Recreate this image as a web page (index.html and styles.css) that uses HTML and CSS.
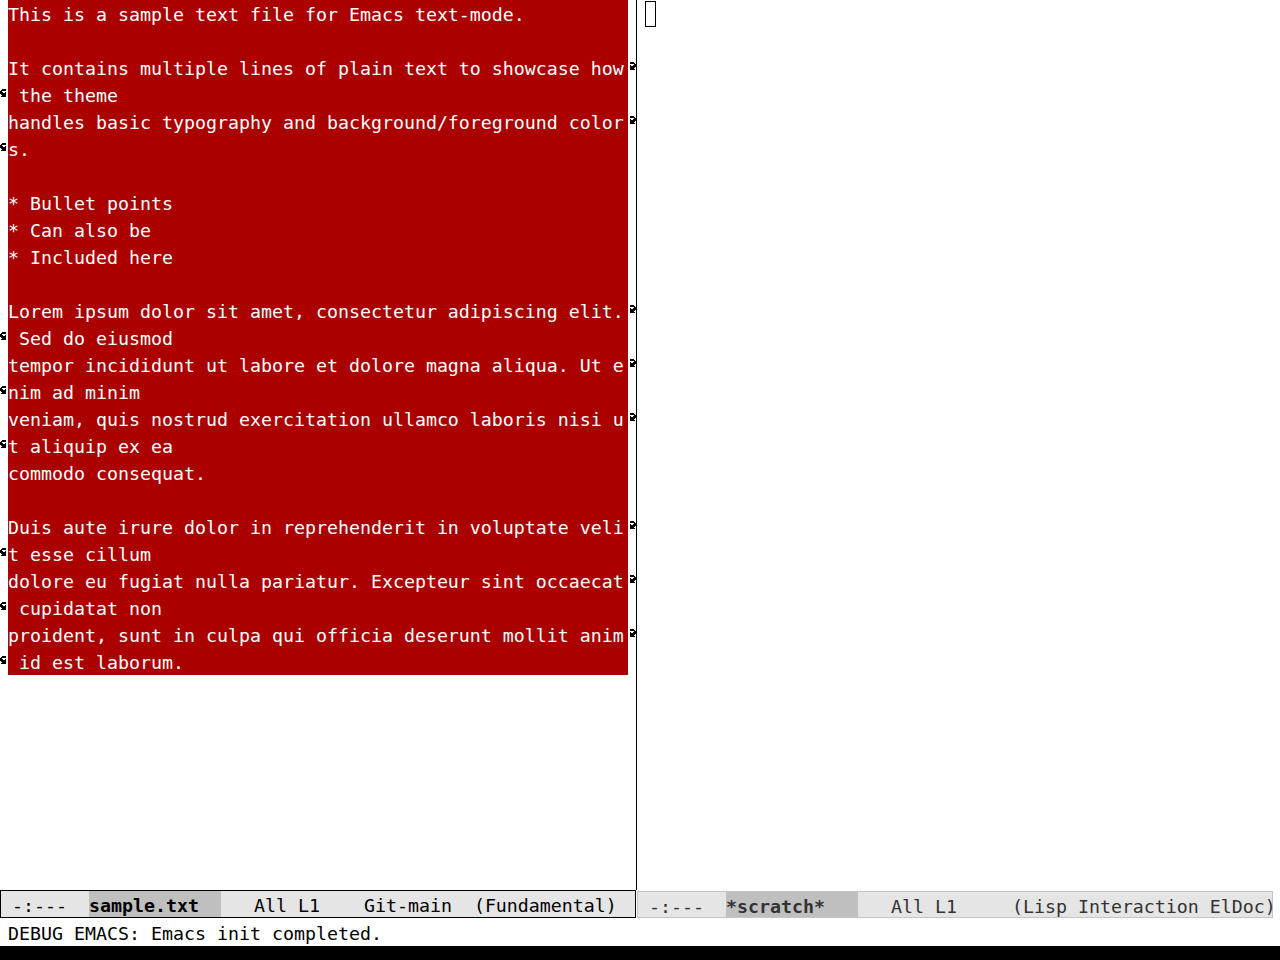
FILE: index.html
```html
<!DOCTYPE html>
<html lang="en">
<head>
  <meta charset="UTF-8">
  <title>sample.txt - Emacs</title>
  <link rel="stylesheet" href="styles.css">
</head>
<body>

<div class="frame">
  <div class="windows">

    <!-- left window: sample.txt -->
    <div class="window window-left">
      <div class="row"><span class="fringe"></span><span class="line">This is a sample text file for Emacs text-mode.</span><span class="fringe"></span></div>
      <div class="row"><span class="fringe"></span><span class="line"></span><span class="fringe"></span></div>
      <div class="row"><span class="fringe"></span><span class="line">It contains multiple lines of plain text to showcase how</span><span class="fringe"><svg class="arrow" viewBox="0 0 8 8"><path d="M2 0h4v1h-4zM2 1h5v1h-5zM6 2h2v1h-2zM2 3h1v1h-1zM5 3h3v1h-3zM2 4h6v1h-6zM2 5h5v1h-5zM2 6h4v1h-4zM2 7h5v1h-5z"/></svg></span></div>
      <div class="row"><span class="fringe"><svg class="arrow" viewBox="0 0 8 8"><path d="M2 0h4v1h-4zM1 1h5v1h-5zM0 2h2v1h-2zM0 3h3v1h-3zM5 3h1v1h-1zM0 4h6v1h-6zM1 5h5v1h-5zM2 6h4v1h-4zM1 7h5v1h-5z"/></svg></span><span class="line"> the theme</span><span class="fringe"></span></div>
      <div class="row"><span class="fringe"></span><span class="line">handles basic typography and background/foreground color</span><span class="fringe"><svg class="arrow" viewBox="0 0 8 8"><path d="M2 0h4v1h-4zM2 1h5v1h-5zM6 2h2v1h-2zM2 3h1v1h-1zM5 3h3v1h-3zM2 4h6v1h-6zM2 5h5v1h-5zM2 6h4v1h-4zM2 7h5v1h-5z"/></svg></span></div>
      <div class="row"><span class="fringe"><svg class="arrow" viewBox="0 0 8 8"><path d="M2 0h4v1h-4zM1 1h5v1h-5zM0 2h2v1h-2zM0 3h3v1h-3zM5 3h1v1h-1zM0 4h6v1h-6zM1 5h5v1h-5zM2 6h4v1h-4zM1 7h5v1h-5z"/></svg></span><span class="line">s.</span><span class="fringe"></span></div>
      <div class="row"><span class="fringe"></span><span class="line"></span><span class="fringe"></span></div>
      <div class="row"><span class="fringe"></span><span class="line">* Bullet points</span><span class="fringe"></span></div>
      <div class="row"><span class="fringe"></span><span class="line">* Can also be</span><span class="fringe"></span></div>
      <div class="row"><span class="fringe"></span><span class="line">* Included here</span><span class="fringe"></span></div>
      <div class="row"><span class="fringe"></span><span class="line"></span><span class="fringe"></span></div>
      <div class="row"><span class="fringe"></span><span class="line">Lorem ipsum dolor sit amet, consectetur adipiscing elit.</span><span class="fringe"><svg class="arrow" viewBox="0 0 8 8"><path d="M2 0h4v1h-4zM2 1h5v1h-5zM6 2h2v1h-2zM2 3h1v1h-1zM5 3h3v1h-3zM2 4h6v1h-6zM2 5h5v1h-5zM2 6h4v1h-4zM2 7h5v1h-5z"/></svg></span></div>
      <div class="row"><span class="fringe"><svg class="arrow" viewBox="0 0 8 8"><path d="M2 0h4v1h-4zM1 1h5v1h-5zM0 2h2v1h-2zM0 3h3v1h-3zM5 3h1v1h-1zM0 4h6v1h-6zM1 5h5v1h-5zM2 6h4v1h-4zM1 7h5v1h-5z"/></svg></span><span class="line"> Sed do eiusmod</span><span class="fringe"></span></div>
      <div class="row"><span class="fringe"></span><span class="line">tempor incididunt ut labore et dolore magna aliqua. Ut e</span><span class="fringe"><svg class="arrow" viewBox="0 0 8 8"><path d="M2 0h4v1h-4zM2 1h5v1h-5zM6 2h2v1h-2zM2 3h1v1h-1zM5 3h3v1h-3zM2 4h6v1h-6zM2 5h5v1h-5zM2 6h4v1h-4zM2 7h5v1h-5z"/></svg></span></div>
      <div class="row"><span class="fringe"><svg class="arrow" viewBox="0 0 8 8"><path d="M2 0h4v1h-4zM1 1h5v1h-5zM0 2h2v1h-2zM0 3h3v1h-3zM5 3h1v1h-1zM0 4h6v1h-6zM1 5h5v1h-5zM2 6h4v1h-4zM1 7h5v1h-5z"/></svg></span><span class="line">nim ad minim</span><span class="fringe"></span></div>
      <div class="row"><span class="fringe"></span><span class="line">veniam, quis nostrud exercitation ullamco laboris nisi u</span><span class="fringe"><svg class="arrow" viewBox="0 0 8 8"><path d="M2 0h4v1h-4zM2 1h5v1h-5zM6 2h2v1h-2zM2 3h1v1h-1zM5 3h3v1h-3zM2 4h6v1h-6zM2 5h5v1h-5zM2 6h4v1h-4zM2 7h5v1h-5z"/></svg></span></div>
      <div class="row"><span class="fringe"><svg class="arrow" viewBox="0 0 8 8"><path d="M2 0h4v1h-4zM1 1h5v1h-5zM0 2h2v1h-2zM0 3h3v1h-3zM5 3h1v1h-1zM0 4h6v1h-6zM1 5h5v1h-5zM2 6h4v1h-4zM1 7h5v1h-5z"/></svg></span><span class="line">t aliquip ex ea</span><span class="fringe"></span></div>
      <div class="row"><span class="fringe"></span><span class="line">commodo consequat.</span><span class="fringe"></span></div>
      <div class="row"><span class="fringe"></span><span class="line"></span><span class="fringe"></span></div>
      <div class="row"><span class="fringe"></span><span class="line">Duis aute irure dolor in reprehenderit in voluptate veli</span><span class="fringe"><svg class="arrow" viewBox="0 0 8 8"><path d="M2 0h4v1h-4zM2 1h5v1h-5zM6 2h2v1h-2zM2 3h1v1h-1zM5 3h3v1h-3zM2 4h6v1h-6zM2 5h5v1h-5zM2 6h4v1h-4zM2 7h5v1h-5z"/></svg></span></div>
      <div class="row"><span class="fringe"><svg class="arrow" viewBox="0 0 8 8"><path d="M2 0h4v1h-4zM1 1h5v1h-5zM0 2h2v1h-2zM0 3h3v1h-3zM5 3h1v1h-1zM0 4h6v1h-6zM1 5h5v1h-5zM2 6h4v1h-4zM1 7h5v1h-5z"/></svg></span><span class="line">t esse cillum</span><span class="fringe"></span></div>
      <div class="row"><span class="fringe"></span><span class="line">dolore eu fugiat nulla pariatur. Excepteur sint occaecat</span><span class="fringe"><svg class="arrow" viewBox="0 0 8 8"><path d="M2 0h4v1h-4zM2 1h5v1h-5zM6 2h2v1h-2zM2 3h1v1h-1zM5 3h3v1h-3zM2 4h6v1h-6zM2 5h5v1h-5zM2 6h4v1h-4zM2 7h5v1h-5z"/></svg></span></div>
      <div class="row"><span class="fringe"><svg class="arrow" viewBox="0 0 8 8"><path d="M2 0h4v1h-4zM1 1h5v1h-5zM0 2h2v1h-2zM0 3h3v1h-3zM5 3h1v1h-1zM0 4h6v1h-6zM1 5h5v1h-5zM2 6h4v1h-4zM1 7h5v1h-5z"/></svg></span><span class="line"> cupidatat non</span><span class="fringe"></span></div>
      <div class="row"><span class="fringe"></span><span class="line">proident, sunt in culpa qui officia deserunt mollit anim</span><span class="fringe"><svg class="arrow" viewBox="0 0 8 8"><path d="M2 0h4v1h-4zM2 1h5v1h-5zM6 2h2v1h-2zM2 3h1v1h-1zM5 3h3v1h-3zM2 4h6v1h-6zM2 5h5v1h-5zM2 6h4v1h-4zM2 7h5v1h-5z"/></svg></span></div>
      <div class="row"><span class="fringe"><svg class="arrow" viewBox="0 0 8 8"><path d="M2 0h4v1h-4zM1 1h5v1h-5zM0 2h2v1h-2zM0 3h3v1h-3zM5 3h1v1h-1zM0 4h6v1h-6zM1 5h5v1h-5zM2 6h4v1h-4zM1 7h5v1h-5z"/></svg></span><span class="line"> id est laborum.</span><span class="fringe"></span></div>
    </div>

    <div class="divider"></div>

    <!-- right window: *scratch* -->
    <div class="window window-right">
      <div class="row"><span class="fringe"></span><span class="cursor"></span></div>
    </div>

  </div>

  <div class="modelines">
    <div class="modeline active"><span> -:---  </span><span class="bufname">sample.txt  </span><span>   All L1    Git-main  (Fundamental)</span></div>
    <div class="modeline inactive"><span> -:---  </span><span class="bufname">*scratch*   </span><span>   All L1     (Lisp Interaction ElDoc)</span></div>
  </div>

  <div class="echo">DEBUG EMACS: Emacs init completed.</div>
  <div class="bottom"></div>
</div>

</body>
</html>
```

FILE: styles.css
```css
* {
  box-sizing: border-box;
}

body {
  margin: 0;
  background: #000;
}

.frame {
  width: 1280px;
  height: 960px;
  display: flex;
  flex-direction: column;
  background: #fff;
  color: #000;
  font-family: "DejaVu Sans Mono", monospace;
  font-size: 18.27px;
}

.windows {
  display: flex;
  height: 890px;
}

.window {
  display: flex;
  flex-direction: column;
}

.window-left {
  width: 636px;
}

.window-right {
  flex: 1;
}

.divider {
  width: 1px;
  background: #000;
}

.row {
  display: flex;
  height: 27px;
}

/* continuation arrows sit in the 8px fringes */
.fringe {
  width: 8px;
  display: flex;
  align-items: flex-start;
  padding-top: 8px;
}

.arrow {
  width: 8px;
  height: 8px;
  fill: #000;
  shape-rendering: crispEdges;
}

.line {
  width: 620px;
  height: 27px;
  line-height: 27px;
  padding-top: 1px;
  background: #aa0000;
  color: #fff;
  white-space: pre;
}

/* hollow box cursor of a non-selected window */
.cursor {
  width: 11px;
  height: 26px;
  margin-top: 1px;
  border: 1px solid #000;
}

.modelines {
  display: flex;
  height: 28px;
}

.modeline {
  width: 636px;
  display: flex;
  white-space: pre;
  line-height: 26px;
  background: #e5e5e5;
}

.modeline span {
  padding-top: 2px;
}

.modeline.active {
  border: 1px solid #000;
  color: #000;
}

.modeline.inactive {
  margin-left: 1px;
  margin-top: 1px;
  height: 27px;
  line-height: 25px;
  border: 1px solid #c4c4c4;
  color: #333;
}

.bufname {
  background: #bfbfbf;
  font-weight: bold;
}

.echo {
  height: 28px;
  padding-left: 8px;
  line-height: 27px;
  padding-top: 2px;
  white-space: pre;
}

.bottom {
  flex: 1;
  background: #000;
}
```
